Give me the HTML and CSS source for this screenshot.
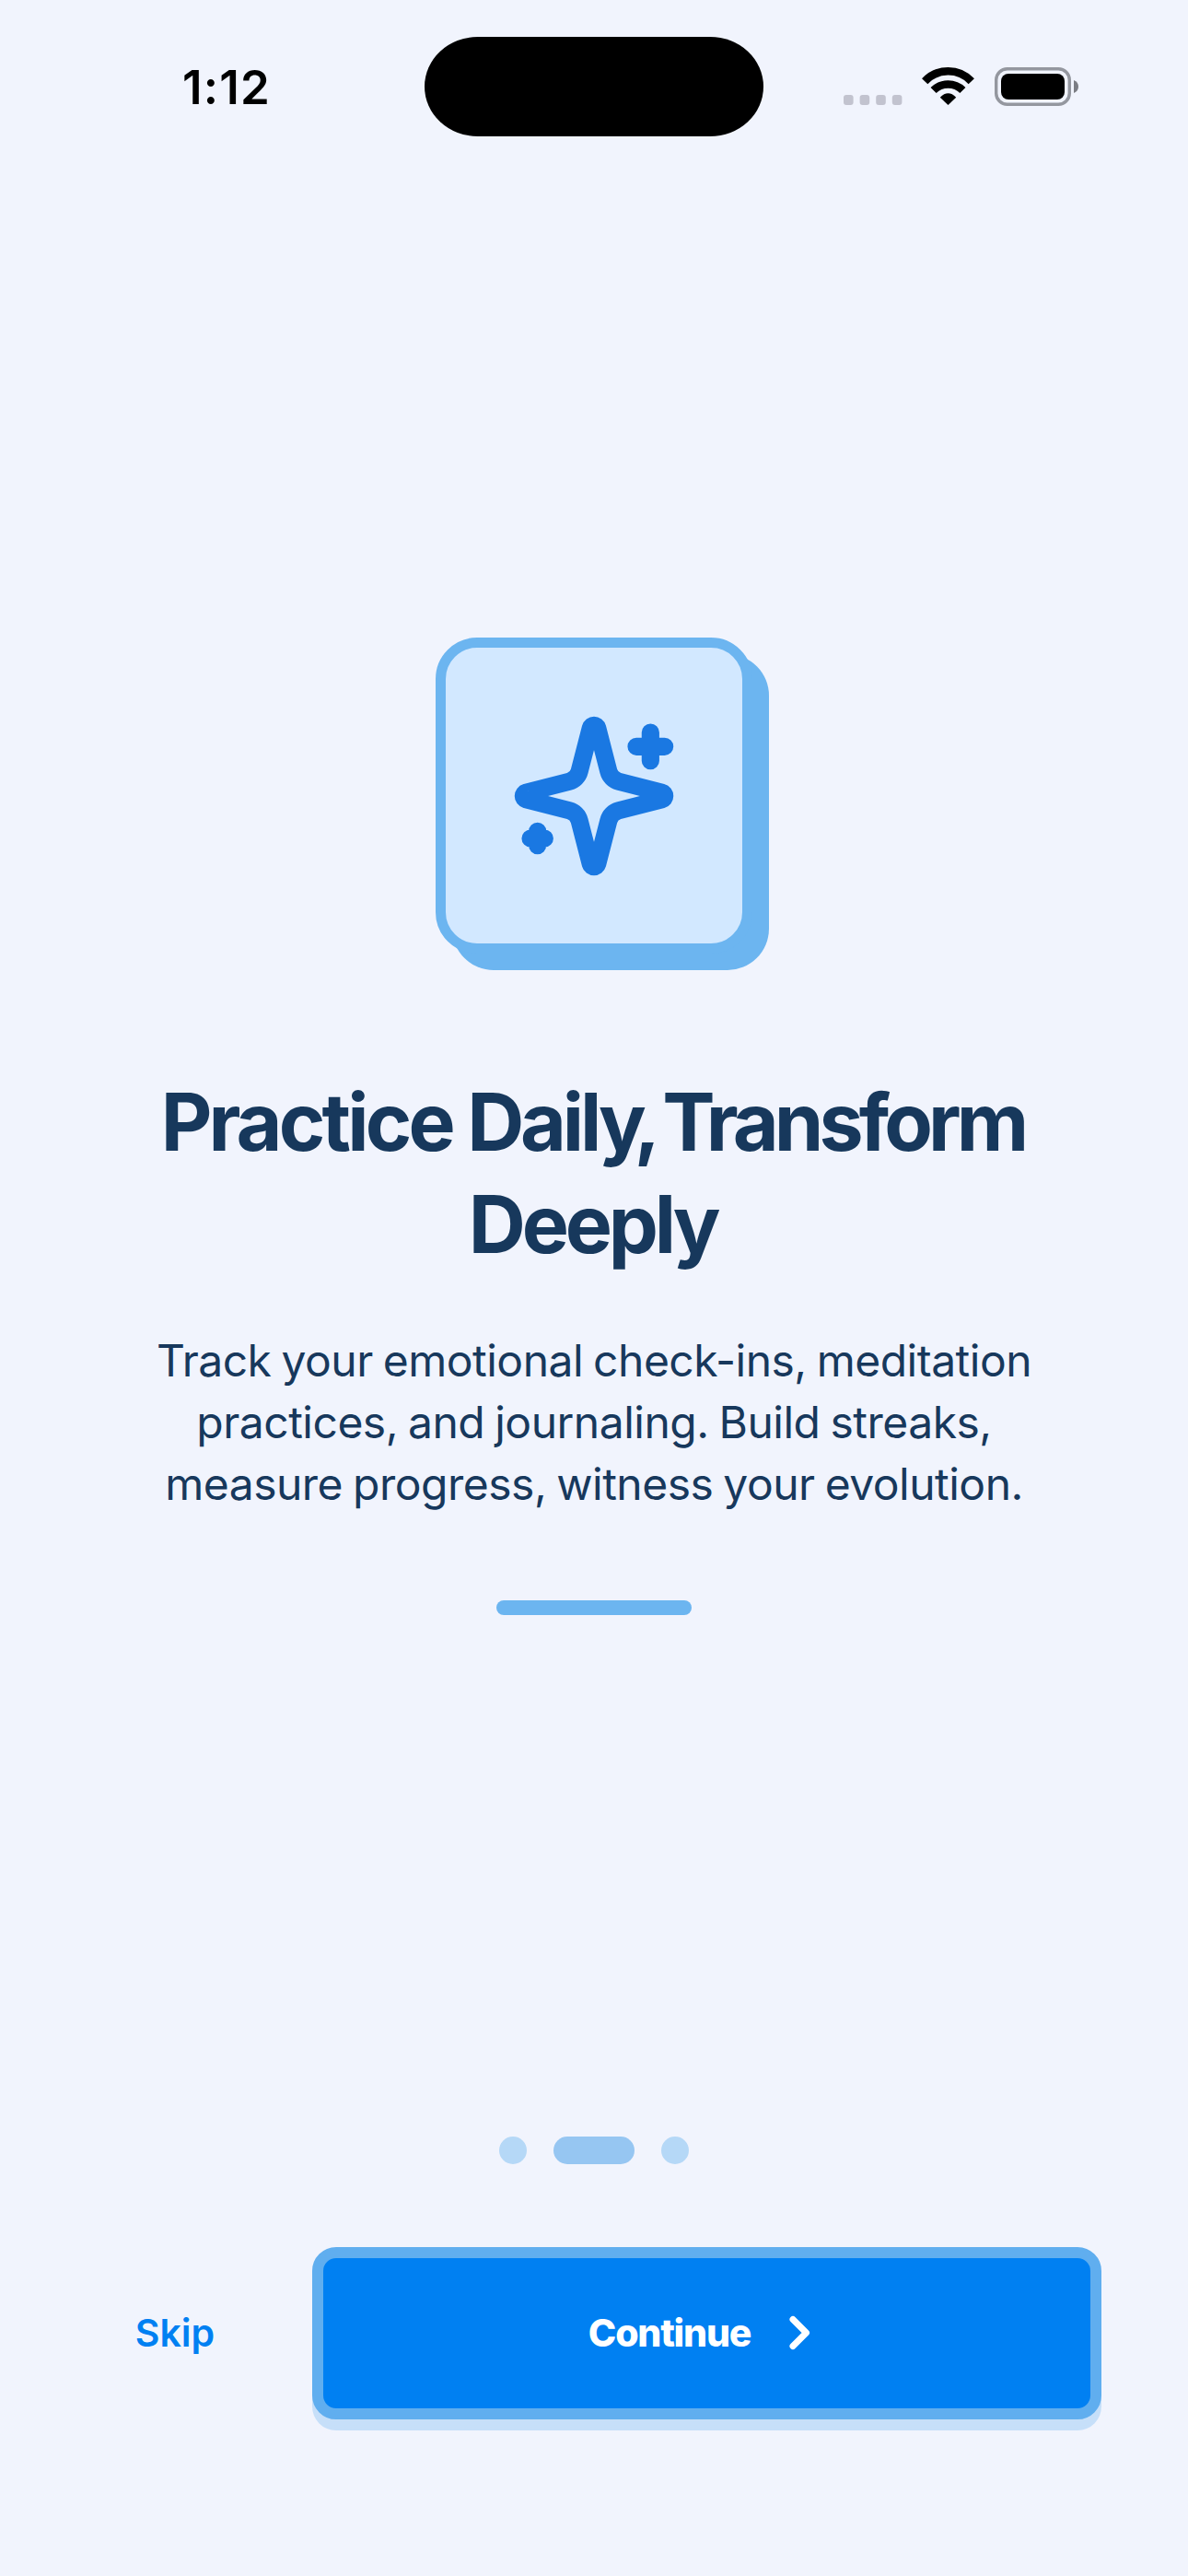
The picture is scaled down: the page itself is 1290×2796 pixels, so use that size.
FILE: index.html
```html
<!DOCTYPE html>
<html lang="en">
<head>
<meta charset="utf-8">
<title>Practice Daily</title>
<link rel="stylesheet" href="styles.css">
</head>
<body>
<main class="screen">
  <header class="status">
    <div class="status-side"><span class="time">1:12</span></div>
    <div class="island"></div>
    <div class="status-side status-icons">
      <svg class="signal" width="64" height="11" viewBox="0 0 64 11"><g fill="#c2c3cf"><rect width="10.6" height="11" rx="3"/><rect x="17.6" width="10.6" height="11" rx="3"/><rect x="35.2" width="10.6" height="11" rx="3"/><rect x="52.8" width="10.6" height="11" rx="3"/></g></svg>
      <svg class="wifi" width="57" height="42" viewBox="0 0 57 42"><path d="M28.5 41 19.800 32.700Q28.500 24 37.200 32.700Z"/><path d="M12.600 25A22.700 22.700 0 0 1 44.400 25" fill="none" stroke="#000" stroke-width="8.700"/><path d="M3.200 15.300A34.600 34.600 0 0 1 53.800 15.300" fill="none" stroke="#000" stroke-width="8.600"/></svg>
      <svg class="battery" width="91" height="42" viewBox="0 0 91 42"><rect x="1.700" y="1.700" width="79.600" height="38.600" rx="12" fill="none" stroke="#94979f" stroke-width="3.400"/><rect x="7" y="7" width="69" height="28" rx="8" /><path d="M86 14q5 2 5 7t-5 7z" fill="#7b7d84"/></svg>
    </div>
  </header>
  <section class="slide">
    <div class="card">
      <svg width="184" height="184" viewBox="0 0 24 24" fill="none" stroke="#1a78e2" stroke-width="2.5" stroke-linecap="round" stroke-linejoin="round"><path d="M9.937 15.5A2 2 0 0 0 8.5 14.063l-6.135-1.582a.5.5 0 0 1 0-.962L8.5 9.936A2 2 0 0 0 9.937 8.500l1.582-6.135a.5.5 0 0 1 .963 0L14.063 8.500A2 2 0 0 0 15.500 9.937l6.135 1.581a.5.5 0 0 1 0 .964L15.500 14.063a2 2 0 0 0-1.437 1.437l-1.582 6.135a.5.5 0 0 1-.963 0z"/><path d="M20 3v4M22 5h-4M4 17v2M5 18H3"/></svg>
    </div>
    <h1 class="title"><span class="title-lead">Practice</span> Daily<span class="comma">,</span> <span class="title-end">Transform</span><br>Deeply</h1>
    <p class="copy">Track your emotional check-ins, meditation<br>practices, and journaling. Build streaks,<br>measure progress, witness your evolution.</p>
    <div class="accent"></div>
  </section>
  <div class="pager"><i class="dot"></i><i class="dot dot-active"></i><i class="dot"></i></div>
  <footer class="actions">
    <button class="skip">Skip</button>
    <button class="continue"><span>Continue</span><svg width="24" height="38" viewBox="0 0 24 38" fill="none" stroke="#fff" stroke-width="7" stroke-linecap="round" stroke-linejoin="round"><path d="M4 4.500 18.500 19 4 33.500"/></svg></button>
  </footer>
</main>
</body>
</html>
```
FILE: styles.css
```css
* { box-sizing: border-box; }
body {
  margin: 0;
  background: #f1f4fd;
  color: #17385c;
  font-family: Inter, "Liberation Sans", sans-serif;
}
.screen {
  display: flex;
  flex-direction: column;
  width: 1290px;
  height: 2796px;
  overflow: hidden;
}
.status {
  display: flex;
  flex: none;
  height: 188px;
  padding-top: 40px;
}
.status-side { width: 461px; color: #000; }
.time {
  display: block;
  padding: 22px 0 0 198px;
  font-size: 51px;
  font-weight: 600;
  line-height: 66px;
  letter-spacing: 1.2px;
}
.island {
  width: 368px;
  height: 108px;
  border-radius: 58px / 54px;
  background: #000;
}
.status-icons {
  display: flex;
  align-items: flex-start;
  padding: 33px 0 0 87px;
}
.signal { margin-top: 30px; }
.wifi { margin-left: 21px; }
.battery { margin-left: 22px; }
.slide {
  display: flex;
  flex-direction: column;
  align-items: center;
  flex: none;
  height: 2131px;
  padding-top: 504px;
}
.card {
  display: flex;
  align-items: center;
  justify-content: center;
  width: 344px;
  height: 343px;
  flex: none;
  border: 11px solid #6cb5f0;
  border-radius: 45px;
  background: #d2e8ff;
  box-shadow: 18px 18px 0 #6cb5f0;
}
.title {
  margin: 128px 0 0;
  padding-right: 3px;
  font-size: 86px;
  font-weight: 700;
  line-height: 111.3px;
  letter-spacing: -4.2px;
  text-align: center;
  white-space: nowrap;
}
.title-lead { letter-spacing: -3.8px; }
.comma { margin: 0 2px 0 -9px; }
.title-end {
  margin-left: -12px;
  letter-spacing: -4.9px;
}
.copy {
  margin: 57.4px 0 0;
  font-size: 48px;
  line-height: 67.2px;
  letter-spacing: -0.5px;
  word-spacing: -2px;
  text-align: center;
  white-space: nowrap;
}
.accent {
  width: 212px;
  height: 16px;
  margin-top: 92.4px;
  border-radius: 8px;
  background: #6cb5f0;
}
.pager {
  display: flex;
  flex: none;
  justify-content: center;
  gap: 29px;
  height: 120px;
}
.dot {
  width: 30px;
  height: 30px;
  border-radius: 15px;
  background: #b5d8f7;
}
.dot-active { width: 88px; background: #96c6f2; }
.actions {
  display: flex;
  flex: none;
  height: 187px;
  padding-left: 94px;
}
button {
  padding: 0;
  border: 0;
  background: none;
  font: 600 41px/50px Inter, "Liberation Sans", sans-serif;
}
.skip {
  width: 192px;
  padding-bottom: 2px;
  color: #0080f2;
}
.continue {
  display: flex;
  align-items: center;
  justify-content: center;
  gap: 42px;
  width: 857px;
  margin-left: 53px;
  padding: 0 15px 2px 0;
  border: 12px solid #60aeef;
  border-radius: 26px;
  background: #0080f2;
  box-shadow: 0 12px 0 #c6dff9;
  color: #fff;
  font-weight: 800;
  letter-spacing: -1.2px;
}
```
